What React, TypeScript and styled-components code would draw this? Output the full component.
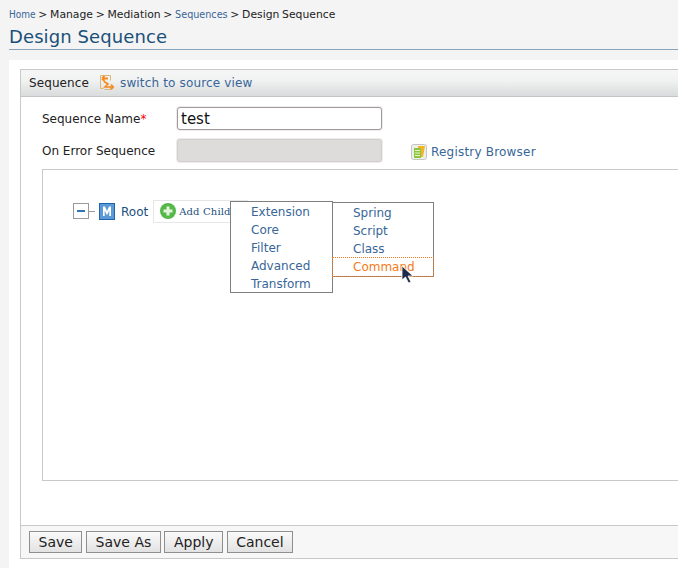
import React from "react";
import styled, { createGlobalStyle } from "styled-components";

const Global = createGlobalStyle`
  html, body { margin: 0; padding: 0; background: #f4f4f4; }
  body { font-family: "DejaVu Sans", sans-serif; font-size: 12px; color: #222; }
  #root { width: 678px; height: 568px; overflow: hidden; }
`;

const Page = styled.div`
  width: 678px;
  height: 568px;
  display: flex;
  flex-direction: column;
  overflow: hidden;
`;
const Crumbs = styled.div`
  height: 14px;
  padding: 8px 0 0 9px;
  font-size: 10.8px;
  word-spacing: -0.7px;
  line-height: 14px;
  color: #222;
  white-space: nowrap;
`;
const CrumbLink = styled.a<{ $size: number }>`
  color: #386698;
  font-size: ${(p) => p.$size}px;
  font-family: "DejaVu Sans Condensed", "DejaVu Sans", sans-serif;
`;
const Title = styled.h1`
  margin: 3px 0 0 9px;
  padding: 0 0 1px 0;
  height: 23px;
  line-height: 23px;
  font-size: 18px;
  font-weight: normal;
  color: #1a5079;
  letter-spacing: 0.1px;
  border-bottom: 1px solid #8aa3bd;
  white-space: nowrap;
`;
const Content = styled.main`
  flex: 1;
  margin: 10px 0 0 9px;
  padding: 9px 0 0 11px;
  background: #fff;
`;
const Panel = styled.section`
  width: 700px;
  height: 488px;
  border: 1px solid #c9c9c9;
  display: flex;
  flex-direction: column;
`;
const PanelHead = styled.header`
  height: 26px;
  flex: none;
  display: flex;
  align-items: center;
  padding-left: 8px;
  font-size: 12px;
  background: linear-gradient(#f6f6f6, #f1f2f2 40%, #d9dbdc);
  border-bottom: 1px solid #c4c4c4;
`;
const HeadLabel = styled.span`
  color: #222;
  letter-spacing: 0.1px;
  margin-right: 10px;
`;
const HeadLink = styled.a`
  color: #386698;
  letter-spacing: 0.15px;
  margin-left: 4px;
`;
const FormArea = styled.div`
  flex: 1;
  padding: 5px 0 0 21px;
  display: flex;
  flex-direction: column;
`;
const FormRow = styled.div`
  height: 32px;
  display: flex;
  align-items: center;
`;
const Label = styled.label`
  width: 135px;
  flex: none;
  color: #222;
  padding-top: 2px;
`;
const Req = styled.span`
  color: #f00;
`;
const TextInput = styled.div`
  width: 205px;
  height: 23px;
  box-sizing: border-box;
  border: 1px solid #a09a9a;
  border-radius: 3px;
  box-shadow: 0 0 0 1px #eeecec;
  background: #fff;
  font-size: 15px;
  line-height: 22px;
  padding-left: 3px;
  color: #111;
`;
const DisabledInput = styled(TextInput)`
  border-color: #d2cece;
  background: #dedbdb;
`;
const RegLink = styled.a`
  margin-left: 29px;
  display: flex;
  align-items: center;
  gap: 4px;
  color: #386698;
  letter-spacing: 0.2px;
  position: relative;
  top: 2px;
`;
const Designer = styled.div`
  width: 700px;
  height: 312px;
  box-sizing: border-box;
  border: 1px solid #c9c9c9;
  margin-top: 3px;
  padding: 31px 0 0 30px;
  position: relative;
`;
const TreeRow = styled.div`
  display: flex;
  align-items: center;
  height: 20px;
`;
const Toggle = styled.span`
  width: 14px;
  height: 14px;
  border: 1px solid #9a9a9a;
  display: flex;
  align-items: center;
  justify-content: center;
  &::before {
    content: "";
    width: 8px;
    height: 2px;
    background: #2f74b5;
  }
`;
const Connector = styled.span`
  width: 6px;
  height: 1px;
  background: #9a9a9a;
  margin-right: 4px;
`;
const RootLabel = styled.span`
  color: #1a4f7d;
  margin-left: 6px;
  margin-right: 5px;
  padding-top: 1px;
`;
const AddChild = styled.div`
  width: 95px;
  height: 23px;
  flex: none;
  box-sizing: border-box;
  border: 1px solid #e6e6e6;
  display: flex;
  align-items: center;
  padding-left: 6px;
  gap: 3px;
  font-family: "DejaVu Serif", serif;
  font-size: 10px;
  letter-spacing: 0.15px;
  color: #1a4f7d;
  white-space: nowrap;
`;
const Menu = styled.ul<{ $left: number; $top: number; $width: number }>`
  position: absolute;
  left: ${(p) => p.$left}px;
  top: ${(p) => p.$top}px;
  width: ${(p) => p.$width}px;
  box-sizing: border-box;
  margin: 0;
  padding: 0;
  list-style: none;
  background: #fff;
  border: 1px solid #7f7f7f;
`;
const MenuItem = styled.li<{ $active?: boolean }>`
  height: 18px;
  line-height: 20px;
  box-sizing: border-box;
  padding-left: 20px;
  color: ${(p) => (p.$active ? "#f47b20" : "#386698")};
  ${(p) =>
    p.$active &&
    `border: 1px dotted #f47b20; line-height: 19px; height: 20px; margin: 0 -1px -1px;`}
`;
const Cursor = styled.svg`
  position: absolute;
  left: 358px;
  top: 95px;
`;
const Footer = styled.footer`
  height: 33px;
  flex: none;
  border-top: 1px solid #c9c9c9;
  background: #f7f7f7;
  display: flex;
  align-items: center;
  gap: 3.7px;
  padding: 0 0 0 8px;
  box-sizing: border-box;
`;
const Button = styled.button`
  height: 22px;
  padding: 0 8.5px;
  border: 1px solid #8f8f8f;
  border-radius: 0;
  background: linear-gradient(#fafafa, #e2e2e2);
  font-family: "DejaVu Sans", sans-serif;
  font-size: 14px;
  color: #222;
`;

const SourceIcon = () => (
  <svg width="17" height="17" viewBox="0 0 17 17">
    <path d="M1.5 .5h10v5M1.5 .5v13h3" fill="none" stroke="#d9b77c" />
    <path d="M11.5 11v3.5h-6" fill="none" stroke="#d9b77c" />
    <path d="M9 3.5H3M3 3.5l2.5-2.5M3 3.5l2.5 2.5" stroke="#f68a1f" strokeWidth="1.8" fill="none" />
    <path d="M5 6.5l4 2.5-3 3h8M14.5 12l-2.5-2.5M14.5 12l-2.5 2.5" stroke="#f68a1f" strokeWidth="1.6" fill="none" />
  </svg>
);
const RegistryIcon = () => (
  <svg width="16" height="16" viewBox="0 0 16 16">
    <rect x=".5" y=".5" width="15" height="15" rx="2" fill="#eeeeea" stroke="#c6c6c0" />
    <path d="M7 2h7l-2 11H7z" fill="#f1b52c" />
    <rect x="3" y="4" width="7" height="10" fill="#8cc63f" />
    <path d="M4 6.5h5M4 9h5M4 11.5h5" stroke="#e6f3cf" />
  </svg>
);
const RootIcon = () => (
  <svg width="16" height="17" viewBox="0 0 16 17">
    <rect width="16" height="17" fill="#5b9ad6" />
    <rect x=".5" y=".5" width="15" height="16" fill="none" stroke="#1d64ad" />
    <path d="M4 3.500h2L8 8l2-4.500h2V13h-1.700V7.500L8.500 11.500h-1L5.700 7.500V13H4z" fill="#fff" />
  </svg>
);
const PlusIcon = () => (
  <svg width="16" height="16" viewBox="0 0 16 16">
    <circle cx="8" cy="8" r="8" fill="#55b848" />
    <path d="M8 3.5v9M3.5 8h9" stroke="#e4f5df" strokeWidth="3" />
  </svg>
);

export default function App() {
  return (
    <Page>
      <Global />
      <Crumbs>
        <CrumbLink $size={10}>Home</CrumbLink> &gt; Manage &gt; Mediation &gt; <CrumbLink $size={10.7}>Sequences</CrumbLink> &gt; Design Sequence
      </Crumbs>
      <Title>Design Sequence</Title>
      <Content>
        <Panel>
          <PanelHead>
            <HeadLabel>Sequence</HeadLabel>
            <SourceIcon />
            <HeadLink>switch to source view</HeadLink>
          </PanelHead>
          <FormArea>
            <FormRow>
              <Label>
                Sequence Name<Req>*</Req>
              </Label>
              <TextInput>test</TextInput>
            </FormRow>
            <FormRow>
              <Label>On Error Sequence</Label>
              <DisabledInput />
              <RegLink>
                <RegistryIcon />
                Registry Browser
              </RegLink>
            </FormRow>
            <Designer>
              <TreeRow>
                <Toggle />
                <Connector />
                <RootIcon />
                <RootLabel>Root</RootLabel>
                <AddChild>
                  <PlusIcon />
                  Add Child
                </AddChild>
              </TreeRow>
              <Menu $left={187} $top={31} $width={103}>
                <MenuItem>Extension</MenuItem>
                <MenuItem>Core</MenuItem>
                <MenuItem>Filter</MenuItem>
                <MenuItem>Advanced</MenuItem>
                <MenuItem>Transform</MenuItem>
              </Menu>
              <Menu $left={289} $top={32} $width={102}>
                <MenuItem>Spring</MenuItem>
                <MenuItem>Script</MenuItem>
                <MenuItem>Class</MenuItem>
                <MenuItem $active>Command</MenuItem>
              </Menu>
              <Cursor width="14" height="20" viewBox="0 0 14 20">
                <path d="M1 1v14l3.5-3 3 6 2.500-1-3-6h5z" fill="#1c2b4a" stroke="#fff" strokeWidth=".8" />
              </Cursor>
            </Designer>
          </FormArea>
          <Footer>
            <Button>Save</Button>
            <Button>Save As</Button>
            <Button>Apply</Button>
            <Button>Cancel</Button>
          </Footer>
        </Panel>
      </Content>
    </Page>
  );
}
